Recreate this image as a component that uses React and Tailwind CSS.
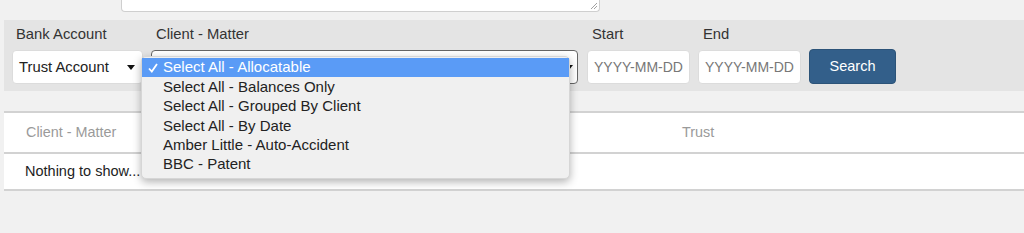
import React from "react";

const OPTIONS = [
  "Select All - Allocatable",
  "Select All - Balances Only",
  "Select All - Grouped By Client",
  "Select All - By Date",
  "Amber Little - Auto-Accident",
  "BBC - Patent",
];

function Caret() {
  return (
    <svg width="8" height="5" viewBox="0 0 8 5" className="shrink-0">
      <path d="M0 0 L8 0 L4 5 Z" fill="#111" />
    </svg>
  );
}

export default function App() {
  return (
    <div
      className="relative h-[233px] w-[1024px] overflow-hidden bg-[#f1f1f1] text-[14.8px] text-[#333]"
      style={{ fontFamily: '"Liberation Sans", Arial, sans-serif' }}
    >
      {/* notes textarea, scrolled mostly out of view */}
      <div className="relative ml-[121px] h-[12px] w-[479px] rounded-b-[4px] border border-t-0 border-[#cfcfcf] bg-white">
        <svg width="8" height="8" viewBox="0 0 8 8" className="absolute bottom-[1px] right-[1px]">
          <path d="M7 1 L1 7 M7 4 L4 7" stroke="#8a8a8a" strokeWidth="0.8" />
        </svg>
      </div>

      {/* filters */}
      <div className="ml-[4px] mt-[8px] h-[71px] bg-[#e4e4e4] pt-[4px]">
        <div className="flex items-end gap-[8px] pl-[8px]">
          <div className="w-[131px]">
            <div className="h-[20px] pl-[4px] leading-[20px]">Bank Account</div>
            <div className="mt-[6px] flex h-[34px] items-center justify-between rounded-[4px] border border-[#dcdcdc] bg-white pl-[6px] pr-[7px] text-[#222]">
              <span>Trust Account</span>
              <Caret />
            </div>
          </div>
          <div className="w-[427px]">
            <div className="h-[20px] pl-[5px] leading-[20px]">Client - Matter</div>
            <div className="mt-[6px] flex h-[34px] items-center justify-end rounded-[4px] border border-[#666] bg-white pr-[4px]">
              <Caret />
            </div>
          </div>
          <div className="ml-[1px] w-[103px]">
            <div className="h-[20px] pl-[5px] leading-[20px]">Start</div>
            <div className="mt-[6px] flex h-[34px] items-center rounded-[4px] border border-[#dcdcdc] bg-white pl-[6px] text-[14px] text-[#777]">
              YYYY-MM-DD
            </div>
          </div>
          <div className="w-[103px]">
            <div className="h-[20px] pl-[5px] leading-[20px]">End</div>
            <div className="mt-[6px] flex h-[34px] items-center rounded-[4px] border border-[#dcdcdc] bg-white pl-[6px] text-[14px] text-[#777]">
              YYYY-MM-DD
            </div>
          </div>
          <button className="flex h-[35px] w-[87px] items-center justify-center rounded-[4px] border border-[#2c5378] bg-[#335f8a] pt-[1px] text-[14.5px] text-white">
            Search
          </button>
        </div>
      </div>

      {/* results table */}
      <div className="ml-[4px] mt-[20px] border-t-2 border-[#d2d2d2] bg-white">
        <div className="flex h-[41px] items-center border-b-2 border-[#d2d2d2] text-[14.4px] text-[#9a9a9a]">
          <div className="w-[678px] pl-[22px]">Client - Matter</div>
          <div>Trust</div>
        </div>
        <div className="flex h-[37px] items-center border-b-2 border-[#d2d2d2] pl-[21px] text-[14.5px] text-[#222]">
          Nothing to show...
        </div>
      </div>

      {/* open native select menu */}
      <div className="absolute left-[141px] top-[56px] w-[429px] rounded-[5px] border border-[#d6d6d6] bg-[#f0f0f0] pb-[4px] pt-[1px] text-[15px] text-[#222] shadow-[0_3px_8px_rgba(0,0,0,0.3)]">
        {OPTIONS.map((o, i) => (
          <div
            key={o}
            className={
              i === 0
                ? "relative flex h-[19.4px] items-center bg-[#5a9bf6] pl-[21px] text-white"
                : "relative flex h-[19.4px] items-center pl-[21px]"
            }
          >
            {i === 0 && (
              <svg width="10" height="10" viewBox="0 0 10 10" className="absolute left-[6px] top-[5px]">
                <path d="M1 5.5 L3.8 8.5 L9 1" fill="none" stroke="#fff" strokeWidth="1.8" />
              </svg>
            )}
            {o}
          </div>
        ))}
      </div>
    </div>
  );
}
